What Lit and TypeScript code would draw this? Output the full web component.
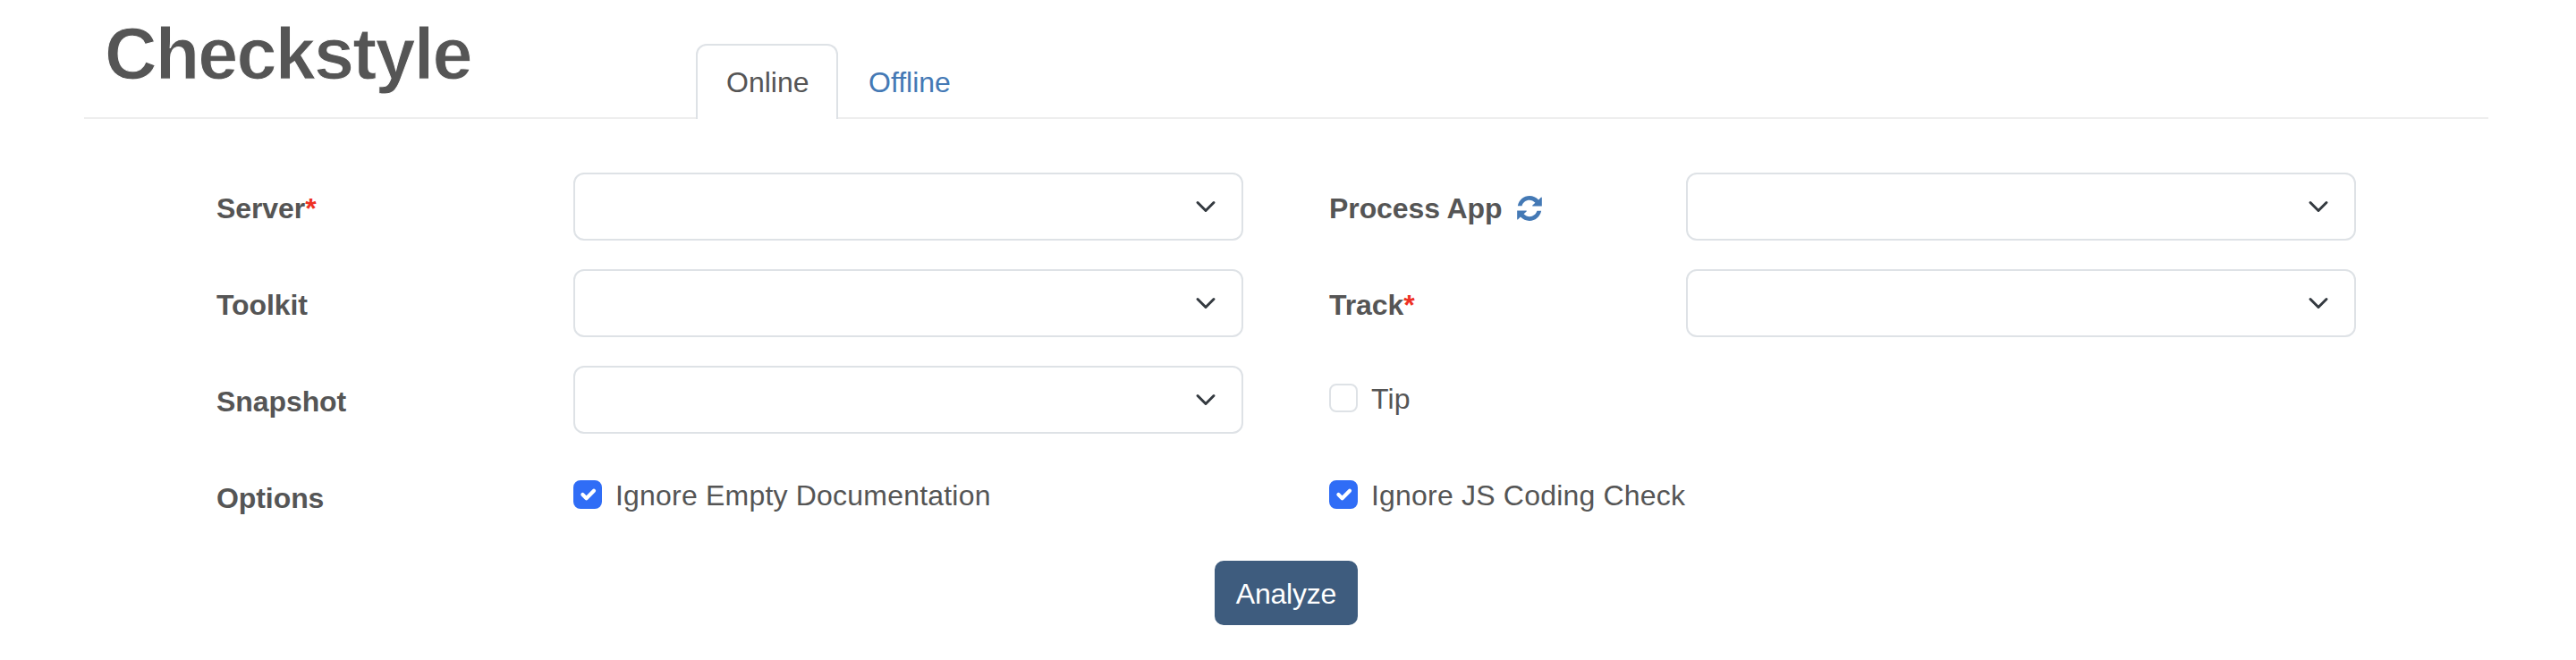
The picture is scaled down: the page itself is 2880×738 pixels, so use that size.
import { LitElement, html, css } from "lit";
import { customElement, property } from "lit/decorators.js";
import { classMap } from "lit/directives/class-map.js";

@customElement("check-option")
class CheckOption extends LitElement {
  @property({ type: Boolean }) checked = false;
  static styles = css`
    :host { display: flex; align-items: center; height: 32px; }
    .box {
      box-sizing: border-box; width: 32px; height: 32px; flex: none;
      border: 2px solid #dee2e6; border-radius: 8px; background: #fff;
    }
    .on { background: #306df6; border-color: #306df6; }
    .mark { display: block; width: 28px; height: 28px; }
    .text { margin-left: 15px; padding-top: 2px; line-height: 36px; letter-spacing: 0.2px; white-space: nowrap; }
  `;
  render() {
    return html`<span class=${classMap({ box: true, on: this.checked })}>
        ${this.checked
          ? html`<svg class="mark" viewBox="0 0 20 20" fill="none" stroke="#fff" stroke-width="3" stroke-linecap="round" stroke-linejoin="round"><path d="m6 10 3 3 6-6"></path></svg>`
          : ""}</span><span class="text"><slot></slot></span>`;
  }
}

@customElement("select-box")
class SelectBox extends LitElement {
  static styles = css`
    :host {
      box-sizing: border-box; display: flex; align-items: center; justify-content: flex-end;
      height: 76px; padding-right: 28px; border: 2px solid #dee2e6; border-radius: 12px; background: #fff;
    }
    .chevron { width: 24px; height: 24px; }
  `;
  render() {
    return html`<svg class="chevron" viewBox="0 0 16 16" fill="none" stroke="#343a40" stroke-width="2" stroke-linecap="round" stroke-linejoin="round"><path d="m2 5 6 6 6-6"></path></svg>`;
  }
}

@customElement("app-root")
class AppRoot extends LitElement {
  static styles = css`
    :host {
      display: block; height: 738px; background: #fff; color: #555;
      font: 32px/48px "Liberation Sans", Arial, sans-serif;
    }
    .header {
      display: flex; box-sizing: border-box; height: 133px; margin: 0 98px 0 94px;
      border-bottom: 2px solid #eee; align-items: flex-end;
    }
    .title {
      box-sizing: border-box; width: 684px; height: 131px; margin: 0; padding: 12px 0 0 23px;
      font-size: 81px; line-height: 96px; font-weight: 700; letter-spacing: -1.8px;
      -webkit-text-stroke: 1px #fff;
    }
    .tab {
      box-sizing: border-box; height: 84px; margin-bottom: -2px; padding: 17px 32px 0 32px;
      border: 2px solid transparent; border-bottom: 0; border-radius: 12px 12px 0 0;
      color: #4479b5;
    }
    .active { width: 159px; background: #fff; border-color: #dee2e6; color: #555; }
    .form {
      display: grid; grid-template-columns: 400px 749px 96px 399px 749px;
      grid-auto-rows: 76px; row-gap: 32px; margin: 60px 0 0 241px;
    }
    .label { grid-column: 1; display: flex; font-weight: 700; padding: 16px 0 0 1px; letter-spacing: -0.08px; white-space: nowrap; }
    .right { grid-column: 4; padding-left: 0; }
    .req { color: #ee3124; }
    .sync { width: 28px; height: 28px; margin: 10px 0 0 16px; fill: #4479b5; }
    .check { align-self: start; margin-top: 20px; }
    .actions { display: flex; padding-left: 1356px; margin-top: 32px; }
    .button {
      box-sizing: border-box; width: 164px; height: 76px; padding: 2px 0 0; border: 2px solid #fff;
      border-radius: 12px; background: #3e5c7e; color: #fff; font: inherit; line-height: 48px;
      letter-spacing: -0.2px; text-align: center;
    }
  `;
  render() {
    const star = html`<span class="req">*</span>`;
    return html`
      <header class="header">
        <h1 class="title">Checkstyle</h1>
        <a class="tab active">Online</a><a class="tab">Offline</a>
      </header>
      <section class="form">
        <label class="label">Server${star}</label><select-box></select-box>
        <label class="label right">Process App<svg class="sync" viewBox="0 0 82 83"><path d="M2 33C6 13 22 0 41 0c12 0 22 5 30 13L79 5q3-2 3 1V34H52q-3 0-1-3l9-8C54 17 48 14 41 14 29 14 19 22 16 33Z"></path><path transform="rotate(180 41 41.5)" d="M2 33C6 13 22 0 41 0c12 0 22 5 30 13L79 5q3-2 3 1V34H52q-3 0-1-3l9-8C54 17 48 14 41 14 29 14 19 22 16 33Z"></path></svg></label><select-box></select-box>
        <label class="label">Toolkit</label><select-box></select-box>
        <label class="label right">Track${star}</label><select-box></select-box>
        <label class="label">Snapshot</label><select-box></select-box>
        <check-option class="check right">Tip</check-option>
        <label class="label">Options</label><check-option class="check" checked>Ignore Empty Documentation</check-option>
        <check-option class="check right" checked>Ignore JS Coding Check</check-option>
      </section>
      <div class="actions"><button class="button">Analyze</button></div>
    `;
  }
}
